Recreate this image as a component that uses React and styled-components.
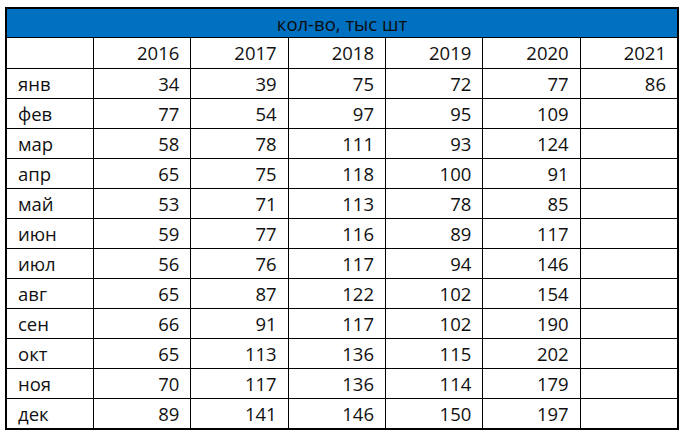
import React from 'react'
import styled, { createGlobalStyle } from 'styled-components'

const GlobalStyle = createGlobalStyle`
  body {
    margin: 0;
    background: #fff;
    font-family: "Open Sans", "Liberation Sans", sans-serif;
  }
`

const Page = styled.div`
  padding: 7px 0 0 5px;
`

const Sheet = styled.div`
  width: 674px;
  box-sizing: border-box;
  border: 2px solid #000;
  display: grid;
  grid-template-columns: 86px repeat(6, 1fr);
  color: #111;
`

const Title = styled.div`
  grid-column: 1 / -1;
  height: 28px;
  background: #0070c0;
  border-bottom: 1px solid #000;
  display: flex;
  align-items: center;
  justify-content: center;
  font-size: 18.5px;
  color: #0d0d0d;
`

const Cell = styled.div`
  height: 30px;
  box-sizing: border-box;
  border-top: ${({ $first }) => ($first ? 'none' : '1px solid #000')};
  border-left: ${({ $label }) => ($label ? 'none' : '1px solid #000')};
  display: flex;
  align-items: center;
  justify-content: ${({ $label }) => ($label ? 'flex-start' : 'flex-end')};
  padding: ${({ $label }) => ($label ? '0 0 1px 11px' : '0 11px 1px 0')};
  font-size: 18.5px;
`

const years = ['2016', '2017', '2018', '2019', '2020', '2021']

const rows = [
  ['янв', 34, 39, 75, 72, 77, 86],
  ['фев', 77, 54, 97, 95, 109],
  ['мар', 58, 78, 111, 93, 124],
  ['апр', 65, 75, 118, 100, 91],
  ['май', 53, 71, 113, 78, 85],
  ['июн', 59, 77, 116, 89, 117],
  ['июл', 56, 76, 117, 94, 146],
  ['авг', 65, 87, 122, 102, 154],
  ['сен', 66, 91, 117, 102, 190],
  ['окт', 65, 113, 136, 115, 202],
  ['ноя', 70, 117, 136, 114, 179],
  ['дек', 89, 141, 146, 150, 197],
]

export default function App() {
  return (
    <Page>
      <GlobalStyle />
      <Sheet>
        <Title>кол-во, тыс шт</Title>
        <Cell $label $first />
        {years.map((y) => (
          <Cell key={y} $first>{y}</Cell>
        ))}
        {rows.map(([month, ...vals]) => (
          <React.Fragment key={month}>
            <Cell $label>{month}</Cell>
            {years.map((y, i) => (
              <Cell key={y}>{vals[i] ?? ''}</Cell>
            ))}
          </React.Fragment>
        ))}
      </Sheet>
    </Page>
  )
}
